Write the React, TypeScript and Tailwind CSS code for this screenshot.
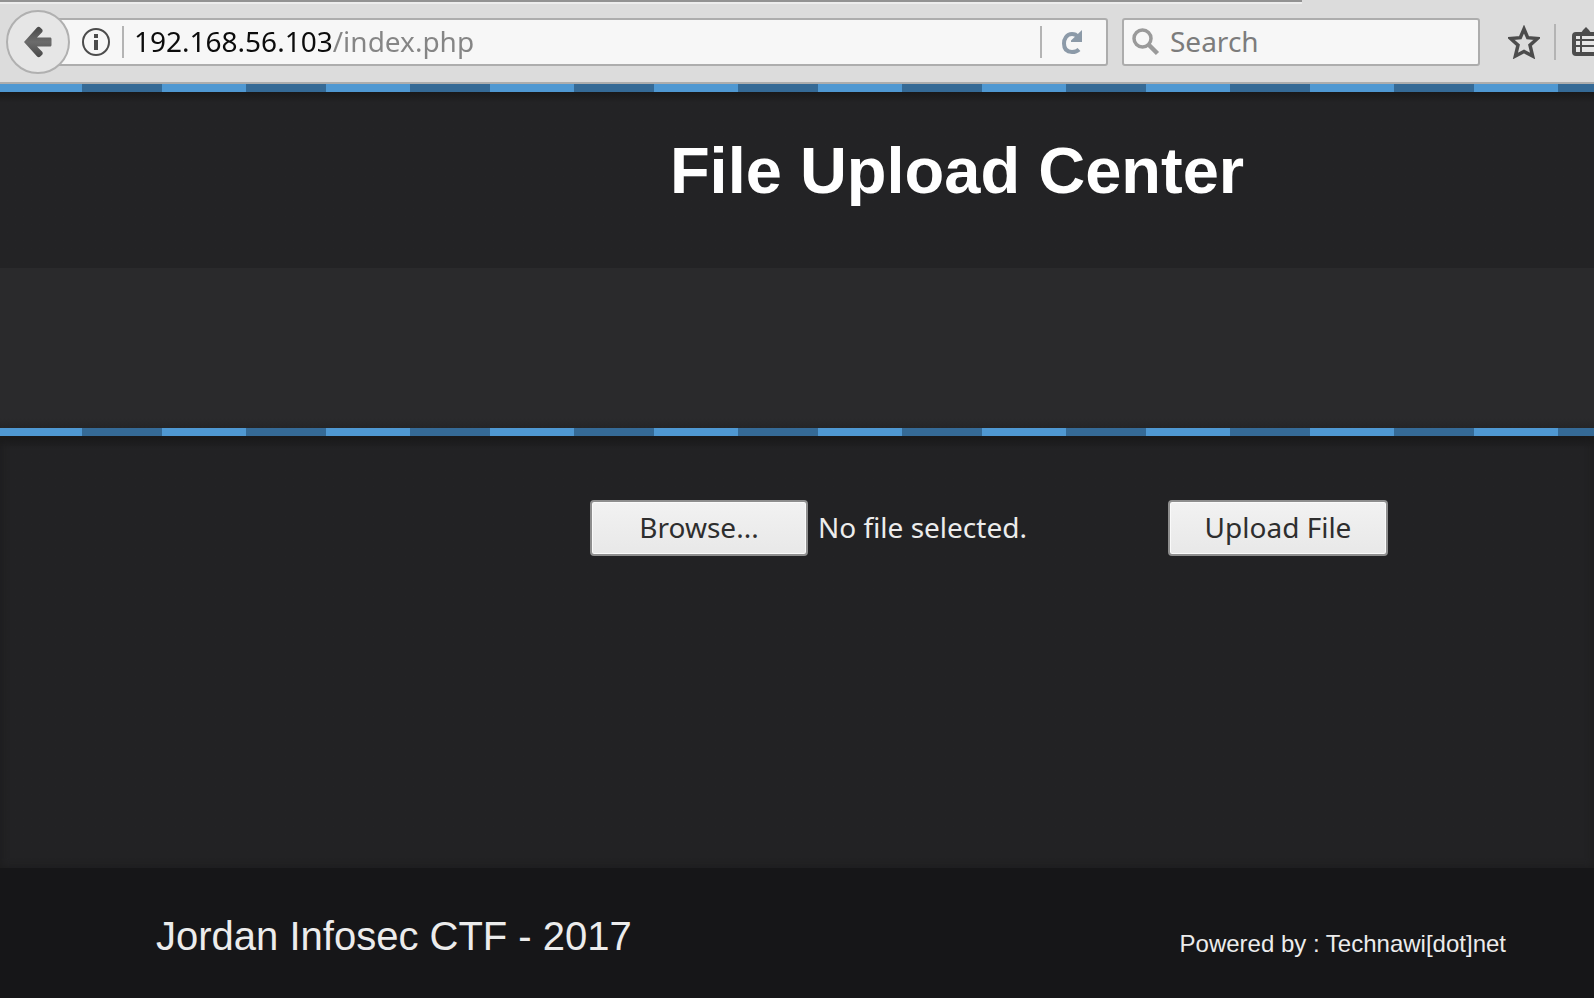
import { useRef, useState } from "react";

function BackIcon() {
  return (
    <svg viewBox="0 0 30 32" className="h-8 w-[30px]" aria-hidden="true">
      <defs>
        <linearGradient id="back-fill" x1="0" y1="0" x2="0" y2="1">
          <stop offset="0" stopColor="#484848" />
          <stop offset="0.5" stopColor="#6c6c6c" />
          <stop offset="1" stopColor="#484848" />
        </linearGradient>
      </defs>
      <path
        d="M1 16 14 1.500c1-1 2.400-.9 3.200-.1l1.900 1.900c.8.9.7 2.100 0 3L14 11.500H27c1 0 1.500.6 1.500 1.500v6c0 .9-.5 1.500-1.500 1.500H14l5.200 5.200c.7.9.8 2.100 0 3l-1.900 1.900c-.8.8-2.200.9-3.200-.100Z"
        fill="url(#back-fill)"
      />
    </svg>
  );
}

function InfoIcon() {
  return (
    <svg viewBox="0 0 28 28" className="size-7" aria-hidden="true">
      <circle cx="14" cy="14" r="13" fill="none" stroke="#4c4c4c" strokeWidth="2" />
      <path d="M12 6h4v4h-4zM12 12h4v10h-4z" fill="#4c4c4c" />
    </svg>
  );
}

function ReloadIcon() {
  return (
    <svg viewBox="0 0 24 24" className="size-6" aria-hidden="true">
      <path
        d="M19 19.500C17.500 21 15 22 12 22 6 22 4 18 4 13.500S6.500 4 12 4c2.500 0 4.500 1 5.500 2.500"
        fill="none"
        stroke="#8c9aa8"
        strokeWidth="4"
      />
      <path d="M22 0v12H11v-1.500Z" fill="#8c9aa8" />
    </svg>
  );
}

function SearchIcon() {
  return (
    <svg viewBox="0 0 28 28" className="size-7" aria-hidden="true">
      <circle cx="10.500" cy="10.500" r="8.500" fill="none" stroke="#9a9a9a" strokeWidth="3.500" />
      <path d="m16 16 9.500 9.500" stroke="#9a9a9a" strokeWidth="4.500" />
    </svg>
  );
}

function StarIcon() {
  return (
    <svg viewBox="0 0 32 34" className="h-[34px] w-8" aria-hidden="true">
      <path
        d="m16 4 3.700 8.700 9.800.8-7.500 6.700 2.600 10.800L16 26.500 7.400 31 10 20.200 2.500 13.500l9.800-.8Z"
        fill="none"
        stroke="#4c4c4c"
        strokeWidth="3.500"
      />
    </svg>
  );
}

function ClipboardIcon() {
  return (
    <svg viewBox="0 0 30 32" className="h-8 w-[30px]" aria-hidden="true">
      <path d="M7 7c2 0 3-1 4-3l3-3 3 3c1 2 2 3 4 3v2H7Z" fill="#4c4c4c" />
      <rect x="2" y="8" width="26" height="20" rx="2" fill="#e6e6e6" stroke="#4c4c4c" strokeWidth="4" />
      <path d="M4 14h22M4 20h22M9 9v18" stroke="#4c4c4c" strokeWidth="2" />
    </svg>
  );
}

function Toolbar() {
  const [address, setAddress] = useState("192.168.56.103/index.php");
  return (
    <div className="flex flex-col border-b-2 border-[#adadad] bg-[#dcdcdc]">
      <div className="mr-[292px] h-1 border-b-2 border-t-2 border-b-[#ececec] border-t-[#929292]" />
      <div className="flex h-[78px] items-center pb-0.5">
        <button
          type="button"
          aria-label="Back"
          className="z-10 ml-1.5 flex size-16 shrink-0 items-center justify-center rounded-full border-2 border-[#b0b0b0] bg-[#e6e6e6]"
        >
          <BackIcon />
        </button>
        <div className="-ml-4 flex h-12 flex-1 items-center rounded-[3px] border-2 border-[#adadad] bg-[#f7f7f7] pl-[26px]">
          <button type="button" aria-label="Site information">
            <InfoIcon />
          </button>
          <span className="ml-3 h-8 w-0.5 bg-[#b4b4b4]" />
          <input
            aria-label="Address"
            value={address}
            onChange={(e) => setAddress(e.target.value)}
            className="ml-2.5 h-10 min-w-0 flex-1 bg-[linear-gradient(90deg,#0c0c0c_199px,#858585_199px)] bg-clip-text pb-0.5 font-['Noto_Sans',sans-serif] text-[28px] text-transparent caret-black outline-none"
          />
          <span className="h-8 w-0.5 bg-[#b4b4b4]" />
          <button type="button" aria-label="Reload" className="ml-[18px] mr-[22px]">
            <ReloadIcon />
          </button>
        </div>
        <label className="ml-3.5 flex h-12 w-[358px] items-center rounded-[3px] border-2 border-[#adadad] bg-[#f7f7f7] pl-2">
          <SearchIcon />
          <input
            aria-label="Search"
            placeholder="Search"
            className="ml-2.5 h-10 min-w-0 flex-1 bg-transparent pb-0.5 font-['Noto_Sans',sans-serif] text-[28px] text-[#333333] outline-none placeholder:text-[#7c7c7c]"
          />
        </label>
        <button type="button" aria-label="Bookmark this page" className="ml-7">
          <StarIcon />
        </button>
        <span className="ml-3.5 h-9 w-0.5 bg-[#b4b4b4]" />
        <button type="button" aria-label="Bookmarks" className="-mr-2 ml-4">
          <ClipboardIcon />
        </button>
      </div>
    </div>
  );
}

function Stripe() {
  return (
    <div className="h-2 shrink-0 bg-[repeating-linear-gradient(90deg,#4f98d2_0px,#4f98d2_82px,#356a96_82px,#356a96_162px,#4f98d2_162px,#4f98d2_164px)]" />
  );
}

const buttonClass =
  "h-14 rounded-[4px] border-2 border-[#8e8e8e] bg-linear-to-b from-[#f2f2f2] to-[#e8e8e8] pb-0.5 text-[28px] text-[#2e2e2e] shadow-[inset_0_0_0_1px_#fafafa]";

function UploadForm() {
  const picker = useRef<HTMLInputElement>(null);
  const [fileName, setFileName] = useState("No file selected.");
  return (
    <form
      onSubmit={(e) => e.preventDefault()}
      className="flex items-center justify-center pl-[384px] pt-16 font-['Noto_Sans',sans-serif]"
    >
      <input
        ref={picker}
        type="file"
        aria-label="File"
        className="hidden"
        onChange={(e) => setFileName(e.target.files?.[0]?.name ?? "No file selected.")}
      />
      <button type="button" onClick={() => picker.current?.click()} className={`w-[218px] ${buttonClass}`}>
        Browse...
      </button>
      <span className="w-[360px] pb-0.5 pl-2.5 text-[28px] leading-9 text-[#ececec]">{fileName}</span>
      <button type="submit" className={`w-[220px] ${buttonClass}`}>
        Upload File
      </button>
    </form>
  );
}

export default function App() {
  return (
    <div className="flex min-h-screen flex-col overflow-x-hidden bg-[#222224] font-['Liberation_Sans',sans-serif]">
      <Toolbar />
      <Stripe />
      <header className="h-44 bg-linear-to-b from-[#19191a] to-[#232325] to-6% pl-[320px] pt-[42px]">
        <h1 className="text-center text-[65px] font-bold leading-[74px] text-white">File Upload Center</h1>
      </header>
      <div className="h-40 bg-linear-to-b from-[#2a2a2c] from-94% to-[#252526]" />
      <Stripe />
      <main className="flex-1 bg-linear-to-b from-[#19191a] to-[#222224] to-3% shadow-[inset_0_0_8px_#1b1b1c]">
        <UploadForm />
      </main>
      <footer className="flex h-[130px] items-start justify-between bg-[#161618] pl-[156px] pr-[88px] text-[#ececec]">
        <p className="pt-[45px] text-[40px] leading-[46px]">Jordan Infosec CTF - 2017</p>
        <p className="pt-[62px] text-[24px] leading-7">Powered by : Technawi[dot]net</p>
      </footer>
    </div>
  );
}
